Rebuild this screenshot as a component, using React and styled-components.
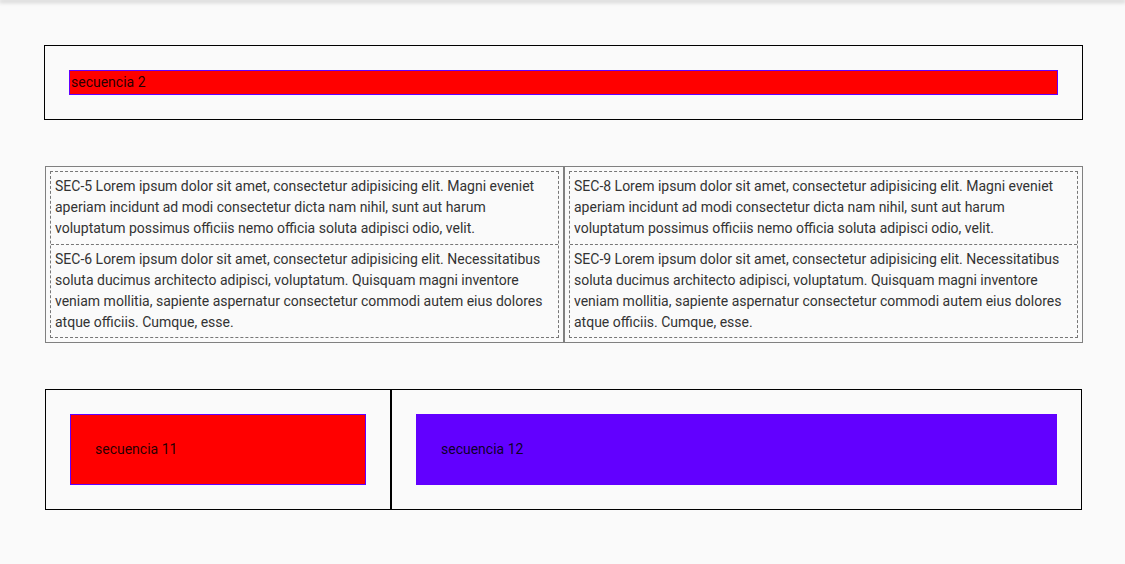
import styled, { createGlobalStyle } from "styled-components";

const GlobalStyle = createGlobalStyle`
  * {
    box-sizing: border-box;
  }
  body {
    margin: 0;
    background: #fafafa;
    font-family: Roboto, "Liberation Sans", sans-serif;
    font-size: 14px;
    line-height: 21px;
    color: rgba(0, 0, 0, 0.87);
  }
`;

const TopBar = styled.div`
  height: 0;
  box-shadow: 0 1px 4px 1px rgba(0, 0, 0, 0.28);
`;

const Page = styled.div`
  display: flex;
  flex-direction: column;
  gap: 46px;
  padding: 45px 0 54px;
`;

const Section = styled.section`
  margin-left: ${(p) => p.left}px;
  width: ${(p) => p.width}px;
`;

const Frame = styled(Section)`
  border: 1px solid #000;
  padding: 24px;
`;

const Bar = styled.div`
  background: #ff0000;
  border: 1px solid #6200ff;
  padding: 1px;
`;

const Grid = styled(Section)`
  display: grid;
  grid-template-columns: 1fr 1fr;
`;

const Column = styled.div`
  border: 1px solid #808080;
  padding: 4px;
`;

const DashedStack = styled.div`
  border: 1px dashed #777;
`;

const Cell = styled.div`
  padding: 4px;
  color: #333;
  &:first-child {
    padding-bottom: 5px;
  }
  & + & {
    border-top: 1px dashed #777;
  }
`;

const Split = styled(Section)`
  display: grid;
  grid-template-columns: 1fr 2fr;
  border: 1px solid #000;
`;

const Pane = styled.div`
  padding: 24px;
  border-right: ${(p) => (p.first ? "1px solid #000" : "none")};
  border-left: ${(p) => (p.first ? "none" : "1px solid #000")};
`;

const Block = styled.div`
  background: ${(p) => p.bg};
  border: 1px solid #6200ff;
  padding: 24px;
`;

const lorem1 =
  "Lorem ipsum dolor sit amet, consectetur adipisicing elit. Magni eveniet aperiam incidunt ad modi consectetur dicta nam nihil, sunt aut harum voluptatum possimus officiis nemo officia soluta adipisci odio, velit.";
const lorem2 =
  "Lorem ipsum dolor sit amet, consectetur adipisicing elit. Necessitatibus soluta ducimus architecto adipisci, voluptatum. Quisquam magni inventore veniam mollitia, sapiente aspernatur consectetur commodi autem eius dolores atque officiis. Cumque, esse.";

const columns = [
  ["SEC-5", "SEC-6"],
  ["SEC-8", "SEC-9"],
];

const App = () => {
  return (
    <>
      <GlobalStyle />
      <TopBar />
      <Page>
        <Frame left={44} width={1039}>
          <Bar>secuencia 2</Bar>
        </Frame>

        <Grid left={45} width={1038}>
          {columns.map(([a, b]) => (
            <Column key={a}>
              <DashedStack>
                <Cell>{`${a} ${lorem1}`}</Cell>
                <Cell>{`${b} ${lorem2}`}</Cell>
              </DashedStack>
            </Column>
          ))}
        </Grid>

        <Split left={45} width={1037}>
          <Pane first>
            <Block bg="#ff0000">secuencia 11</Block>
          </Pane>
          <Pane>
            <Block bg="#6200ff">secuencia 12</Block>
          </Pane>
        </Split>
      </Page>
    </>
  );
};

export default App;
